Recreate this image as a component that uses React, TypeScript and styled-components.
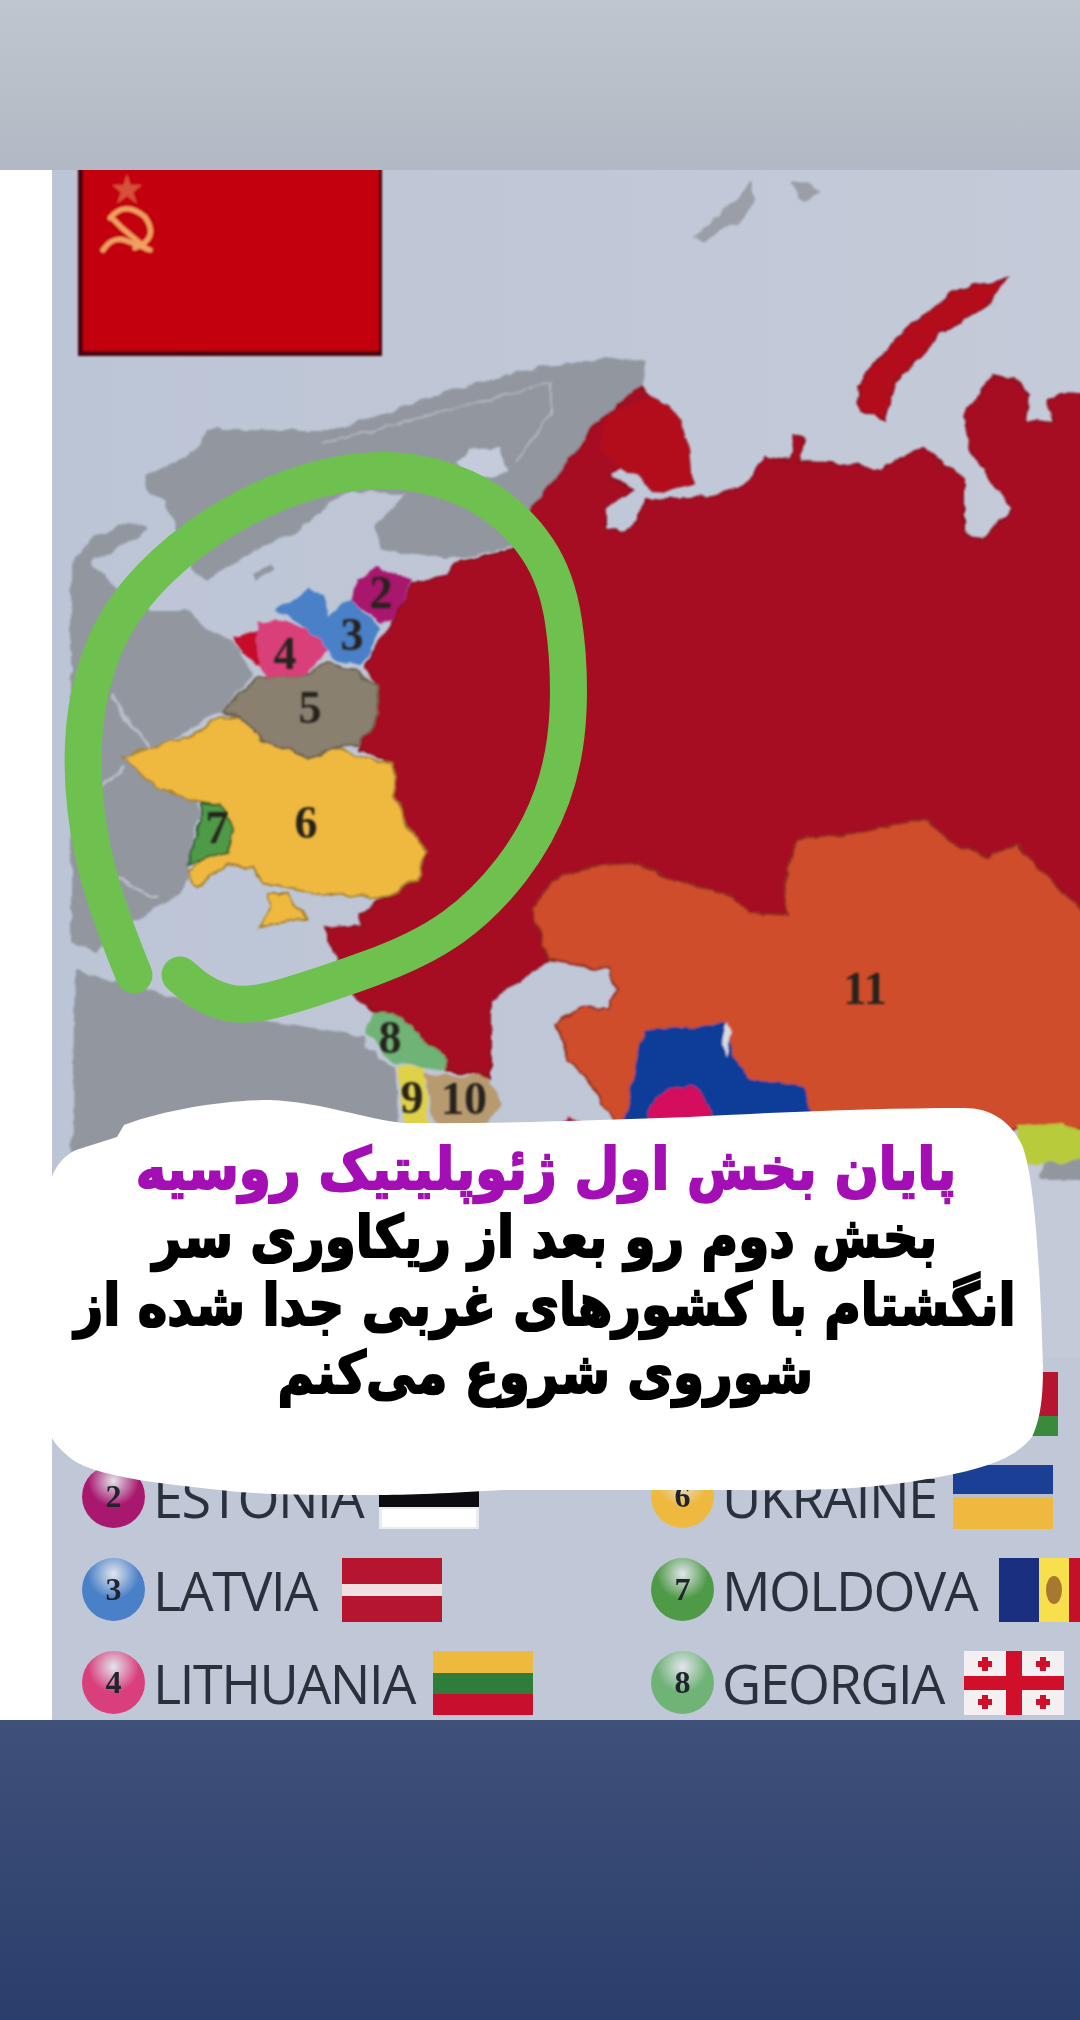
import styled, { createGlobalStyle } from "styled-components";

const GlobalStyle = createGlobalStyle`
  html, body {
    margin: 0;
    padding: 0;
    background: #fff;
  }
`;

const Page = styled.div`
  position: relative;
  width: 1080px;
  height: 2020px;
  overflow: hidden;
  display: flex;
  flex-direction: column;
`;

const TopBand = styled.div`
  height: 170px;
  flex: none;
  background: linear-gradient(180deg, #c0c6ce 0%, #b2b9c4 100%);
`;

const BottomBand = styled.div`
  height: 300px;
  flex: none;
  background: linear-gradient(180deg, #3f5179 0%, #2a3e6c 100%);
`;

const Middle = styled.div`
  height: 1550px;
  flex: none;
  display: flex;
  background: #fff;
`;

const MapPanel = styled.div`
  margin-left: 52px;
  width: 1028px;
  overflow: hidden;
  background: #c0c8d8;
`;

const MapSvg = styled.svg`
  display: block;
  width: 1028px;
  height: 1187px;
`;

const Legend = styled.div`
  display: grid;
  grid-template-columns: 569px 1fr;
  grid-auto-rows: 93px;
  padding-left: 30px;
`;

const LegendItem = styled.div`
  display: flex;
  align-items: center;
  white-space: nowrap;
`;

const Badge = styled.span<{ $color: string }>`
  flex: none;
  width: 63px;
  height: 63px;
  border-radius: 50%;
  display: flex;
  align-items: center;
  justify-content: center;
  background: radial-gradient(circle at 50% 25%, #ffffff88 0%, ${(p) => p.$color} 45%, ${(p) => p.$color} 100%);
  color: #20242c;
  font-family: "Liberation Serif", serif;
  font-weight: 700;
  font-size: 32px;
  filter: blur(0.6px);
`;

const Label = styled.span`
  margin-left: 8px;
  font-family: "Open Sans", sans-serif;
  font-size: 54px;
  line-height: 1;
  letter-spacing: -1.6px;
  color: #2a303c;
  filter: blur(0.7px);
`;

const Flag = styled.svg<{ $gap: number }>`
  flex: none;
  margin-left: ${(p) => p.$gap}px;
  width: 100px;
  height: 64px;
  filter: blur(0.6px);
`;

const Bubble = styled.div`
  position: absolute;
  left: 48px;
  top: 1100px;
  width: 995px;
  height: 397px;
  padding-top: 35px;
  box-sizing: border-box;
  display: flex;
  flex-direction: column;
  align-items: center;
`;

const BubbleShape = styled.svg`
  position: absolute;
  inset: 0;
  width: 100%;
  height: 100%;
`;

const BubbleLine = styled.div<{ $title?: boolean }>`
  position: relative;
  direction: rtl;
  white-space: nowrap;
  font-family: "DejaVu Sans", sans-serif;
  font-weight: 700;
  font-size: 58px;
  line-height: 68px;
  color: ${(p) => (p.$title ? "#a30fb4" : "#000")};
  -webkit-text-stroke: 2.2px ${(p) => (p.$title ? "#a30fb4" : "#000")};
  transform: scaleX(${(p) => (p.$title ? 0.89 : 0.86)});
`;

const MapNumber = styled.text`
  font-family: "Liberation Serif", serif;
  font-weight: 700;
  font-size: 46px;
  fill: #26241c;
  text-anchor: middle;
  dominant-baseline: central;
`;

// green marker stroke, smoothed through the points read off the screenshot
const smooth = (pts: number[][]) => {
  let d = `M${pts[0][0]} ${pts[0][1]}`;
  for (let i = 1; i < pts.length - 1; i++) {
    const mx = (pts[i][0] + pts[i + 1][0]) / 2;
    const my = (pts[i][1] + pts[i + 1][1]) / 2;
    d += ` Q${pts[i][0]} ${pts[i][1]} ${mx} ${my}`;
  }
  const last = pts[pts.length - 1];
  return `${d} L${last[0]} ${last[1]}`;
};

const ring = smooth([
  [134, 975], [115, 929], [91, 852], [81, 768], [88, 688], [118, 612], [184, 543], [277, 489],
  [375, 466], [458, 481], [518, 520], [557, 578], [570, 665], [566, 757], [538, 835], [485, 904],
  [421, 950], [316, 988], [245, 1008], [205, 996], [180, 975],
]);

const russia =
  "530,510 606,413 640,387 651,397 678,417 689,450 692,483 661,492 620,467 610,477 634,490 606,507 606,527 627,533 647,500 709,497 744,487 764,457 790,462 795,435 805,440 798,462 833,463 881,470 923,447 964,480 964,533 985,540 1012,507 971,450 964,417 992,375 1019,383 1030,395 1026,420 1054,423 1047,400 1080,393 1090,393 1090,1000 549,960 491,1000 491,1077 447,1070 444,1057 400,1017 370,1007 356,998 336,956 324,929 364,925 360,914 383,898 419,879 427,850 407,825 395,795 393,764 360,749 379,714 377,688 364,668 395,619 411,584 447,573 458,561 514,550";
const scandinavia =
  "647,363 606,357 523,370 441,393 337,430 207,430 193,453 145,477 148,492 165,500 186,563 207,580 262,547 296,533 330,503 351,492 406,493 375,527 382,550 448,560 513,547 530,510 606,413 640,387";
const europe =
  "71,565 91,538 134,521 148,527 134,542 95,557 91,565 115,588 150,611 186,611 209,630 233,641 253,676 221,710 158,749 122,757 158,783 198,802 201,814 186,864 190,879 174,898 130,925 95,952 71,940";
const turkey =
  "75,971 95,975 130,985 237,1017 296,1025 364,1036 365,1047 394,1067 400,1135 120,1160 71,1170";
const kazakhstan =
  "531,907 554,880 598,865 638,863 668,877 708,890 738,900 748,913 788,915 783,887 798,840 862,832 927,818 947,840 987,857 1016,845 1056,883 1090,920 1090,1130 618,1130 594,1087 569,1060 556,1023 578,1008 608,1007 616,990 608,970 549,960";
const ukraine =
  "122,757 158,745 194,735 221,716 241,718 261,741 308,757 336,747 360,757 393,764 395,795 407,825 427,850 419,879 379,898 308,892 261,883 253,868 225,864 198,887 186,871 206,856 229,852 233,829 221,806 198,801 158,787";

const App = () => (
  <Page>
    <GlobalStyle />
    <TopBand />
    <Middle>
      <MapPanel>
        <MapSvg viewBox="52 170 1028 1187">
          <defs>
            <filter id="coast" x="-5%" y="-5%" width="110%" height="110%">
              <feTurbulence type="fractalNoise" baseFrequency="0.06" numOctaves="2" seed="4" result="noise" />
              <feDisplacementMap in="SourceGraphic" in2="noise" scale="9" xChannelSelector="R" yChannelSelector="G" />
              <feGaussianBlur stdDeviation="1.1" />
            </filter>
            <filter id="soft" x="-5%" y="-5%" width="110%" height="110%">
              <feGaussianBlur stdDeviation="0.9" />
            </filter>
            <linearGradient id="sea" x1="0" x2="1">
              <stop offset="0" stopColor="#bcc5d6" />
              <stop offset="1" stopColor="#c4cad8" />
            </linearGradient>
          </defs>
          <rect x="52" y="170" width="1028" height="1187" fill="url(#sea)" />
          <g filter="url(#coast)">
            {/* lands */}
            <polygon points={scandinavia} fill="#92979f" />
            <polygon points="455,462 470,450 500,447 506,470 490,478 470,478" fill="#c4ccdb" />
            <polygon points={europe} fill="#92979f" />
            <polygon points="253,573 270,565 275,570 258,580" fill="#92979f" />
            <polygon points={turkey} fill="#92979f" />
            <polygon points="1046,1160 1090,1145 1090,1180 1040,1180" fill="#92979f" />
            <polygon points="695,237 710,222 737,200 751,180 755,200 738,222 705,240" fill="#999ea7" />
            <polygon points="792,184 808,180 820,192 806,200 796,198" fill="#999ea7" />
            <polyline points="324,443 551,383 551,413 516,463" fill="none" stroke="#b0b5bd" strokeWidth="2" />
            <polyline points="111,695 150,749" fill="none" stroke="#b8bfca" strokeWidth="3" />
            <polyline points="103,787 122,768" fill="none" stroke="#b8bfca" strokeWidth="3" />
            <polyline points="115,879 158,898" fill="none" stroke="#b8bfca" strokeWidth="3" />

            {/* russia and republics */}
            <polygon points={russia} fill="#a60f24" stroke="#8e0c1e" strokeWidth="2" />
            <polygon points="606,413 651,397 678,417 689,450 692,483 661,492 620,467 600,450" fill="#b3101f" />
            <polygon points="1009,277 950,293 895,340 857,387 861,410 885,420 895,383 937,337 992,300" fill="#b3101f" stroke="#8e0c1e" strokeWidth="2" />
            <polygon points={kazakhstan} fill="#cf4d2c" stroke="#8a2a20" strokeWidth="2" />
            <polygon points="643,1030 703,1027 728,1022 733,1057 748,1077 802,1087 817,1125 623,1125" fill="#0c3e98" />
            <circle cx="680" cy="1118" r="32" fill="#d4105f" />
            <polygon points="1016,1127 1061,1122 1090,1137 1090,1160 1026,1165" fill="#b8cc3a" />
            <polygon points="728,1022 722,1040 726,1057 732,1030" fill="#d8dce2" />
            <polygon points={ukraine} fill="#efb93f" stroke="#a58030" strokeWidth="2" />
            <polygon points="269,894 289,894 292,906 308,917 259,927 269,910" fill="#efb93f" stroke="#a58030" strokeWidth="2" />
            <polygon points="202,802 221,806 233,829 229,852 186,864 202,822" fill="#4f9a46" stroke="#2e5e2c" strokeWidth="2" />
            <polygon points="221,711 257,678 304,676 328,661 356,672 377,688 379,714 360,745 336,747 308,757 261,741 241,718" fill="#8a8070" stroke="#6c6048" strokeWidth="2" />
            <polygon points="233,638 257,630 272,650 265,668 241,653" fill="#c5102a" />
            <polygon points="257,622 277,619 308,630 328,649 304,676 269,678 261,668" fill="#d93f7a" />
            <polygon points="277,611 308,590 322,594 328,615 352,599 379,626 372,653 360,665 336,659 328,649 308,630" fill="#4a80c8" />
            <polygon points="356,580 375,567 411,580 395,619 379,622 352,599" fill="#a8186e" />
            <polygon points="365,1033 375,1010 400,1017 444,1057 447,1070 394,1063" fill="#6fb377" />
            <polygon points="397,1067 424,1067 429,1125 404,1125" fill="#dfd24a" />
            <polygon points="424,1073 489,1077 501,1103 489,1125 434,1125" fill="#b89a70" />
            <polygon points="555,1125 569,1116 582,1125" fill="#a60f24" />
          </g>

          <g filter="url(#soft)">
            {/* soviet flag */}
            <rect x="78" y="165" width="304" height="191" fill="#4a0510" />
            <rect x="83" y="165" width="296" height="186" fill="#c3000f" />
            <polygon points="127,177 130,186 139,186 132,192 135,201 127,195 119,201 122,192 115,186 124,186" fill="#d8503a" stroke="#d8503a" strokeWidth="2" />
            <path d="M110 218 Q125 200 145 217 Q160 238 135 248" fill="none" stroke="#f0a060" strokeWidth="5" strokeLinecap="round" />
            <path d="M112 218 L122 228 L148 250" fill="none" stroke="#f0a060" strokeWidth="5" />
            <path d="M103 250 C110 240 118 236 130 242 L150 250" fill="none" stroke="#f0a060" strokeWidth="5" strokeLinecap="round" />

            {/* numbers */}
            <MapNumber x="381" y="592">2</MapNumber>
            <MapNumber x="352" y="634">3</MapNumber>
            <MapNumber x="285" y="653">4</MapNumber>
            <MapNumber x="310" y="707">5</MapNumber>
            <MapNumber x="306" y="822">6</MapNumber>
            <MapNumber x="217" y="827">7</MapNumber>
            <MapNumber x="390" y="1037">8</MapNumber>
            <MapNumber x="412" y="1097">9</MapNumber>
            <MapNumber x="464" y="1098">10</MapNumber>
            <MapNumber x="865" y="988">11</MapNumber>
          </g>
          <path d={ring} fill="none" stroke="#6fc14f" strokeWidth="37" strokeLinecap="round" strokeLinejoin="round" />
        </MapSvg>

        <Legend>
          <LegendItem />
          <LegendItem>
            <Flag $gap={307} viewBox="0 0 100 64">
              <rect width="100" height="64" fill="#b5152e" />
              <rect y="44" width="100" height="20" fill="#3a8a3e" />
            </Flag>
          </LegendItem>

          <LegendItem>
            <Badge $color="#a8186e">2</Badge>
            <Label>ESTONIA</Label>
            <Flag $gap={16} viewBox="0 0 100 64">
              <rect width="100" height="64" fill="#e8ecf2" />
              <rect width="100" height="42" fill="#0c0c10" />
              <rect y="44" x="3" width="94" height="18" fill="#fff" />
            </Flag>
          </LegendItem>
          <LegendItem>
            <Badge $color="#efb93f">6</Badge>
            <Label>UKRAINE</Label>
            <Flag $gap={17} viewBox="0 0 100 64">
              <rect width="100" height="64" fill="#efb93f" />
              <rect width="100" height="29" fill="#1a3f94" />
              <rect y="29" width="100" height="3" fill="#b8c0d0" />
            </Flag>
          </LegendItem>

          <LegendItem>
            <Badge $color="#4a80c8">3</Badge>
            <Label>LATVIA</Label>
            <Flag $gap={25} viewBox="0 0 100 64">
              <rect width="100" height="64" fill="#b5152e" />
              <rect y="26" width="100" height="12" fill="#f2dfe2" />
            </Flag>
          </LegendItem>
          <LegendItem>
            <Badge $color="#4f9a46">7</Badge>
            <Label>MOLDOVA</Label>
            <Flag $gap={22} viewBox="0 0 100 64">
              <rect width="40" height="64" fill="#1b2f80" />
              <rect x="40" width="30" height="64" fill="#f7e04b" />
              <rect x="70" width="30" height="64" fill="#c5102a" />
              <ellipse cx="55" cy="32" rx="8" ry="14" fill="#a87830" />
            </Flag>
          </LegendItem>

          <LegendItem>
            <Badge $color="#d93f7a">4</Badge>
            <Label>LITHUANIA</Label>
            <Flag $gap={18} viewBox="0 0 100 64">
              <rect width="100" height="22" fill="#eeb93f" />
              <rect y="22" width="100" height="21" fill="#2f7d3a" />
              <rect y="43" width="100" height="21" fill="#c8102e" />
            </Flag>
          </LegendItem>
          <LegendItem>
            <Badge $color="#6fb377">8</Badge>
            <Label>GEORGIA</Label>
            <Flag $gap={20} viewBox="0 0 100 64">
              <rect width="100" height="64" fill="#f4f0f2" />
              <rect x="42" width="16" height="64" fill="#d0102a" />
              <rect y="25" width="100" height="14" fill="#d0102a" />
              <rect x="18" y="6" width="6" height="14" fill="#d0102a" />
              <rect x="14" y="10" width="14" height="6" fill="#d0102a" />
              <rect x="76" y="6" width="6" height="14" fill="#d0102a" />
              <rect x="72" y="10" width="14" height="6" fill="#d0102a" />
              <rect x="18" y="44" width="6" height="14" fill="#d0102a" />
              <rect x="14" y="48" width="14" height="6" fill="#d0102a" />
              <rect x="76" y="44" width="6" height="14" fill="#d0102a" />
              <rect x="72" y="48" width="14" height="6" fill="#d0102a" />
            </Flag>
          </LegendItem>
        </Legend>
      </MapPanel>
    </Middle>
    <BottomBand />

    <Bubble>
      <BubbleShape viewBox="48 1100 995 397">
        <path
          d="M124 1125 C170 1108 230 1100 270 1100 C320 1102 370 1120 404 1123 C500 1124 600 1120 689 1117 C780 1112 880 1108 964 1108 C995 1108 1012 1125 1022 1145 C1034 1175 1040 1260 1043 1367 C1043 1400 1040 1420 1032 1437 C1012 1462 975 1472 902 1483 C840 1492 770 1490 703 1490 C640 1490 570 1490 504 1490 C450 1493 410 1495 372 1495 C320 1495 280 1495 239 1492 C200 1488 165 1484 139 1480 C105 1474 85 1468 73 1460 C58 1448 50 1440 48 1425 L52 1177 C56 1165 65 1155 76 1150 L117 1137 Z"
          fill="#fff"
        />
      </BubbleShape>
      <BubbleLine $title>پایان بخش اول ژئوپلیتیک روسیه</BubbleLine>
      <BubbleLine>بخش دوم رو بعد از ریکاوری سر</BubbleLine>
      <BubbleLine>انگشتام با کشورهای غربی جدا شده از</BubbleLine>
      <BubbleLine>شوروی شروع می‌کنم</BubbleLine>
    </Bubble>
  </Page>
);

export default App;
